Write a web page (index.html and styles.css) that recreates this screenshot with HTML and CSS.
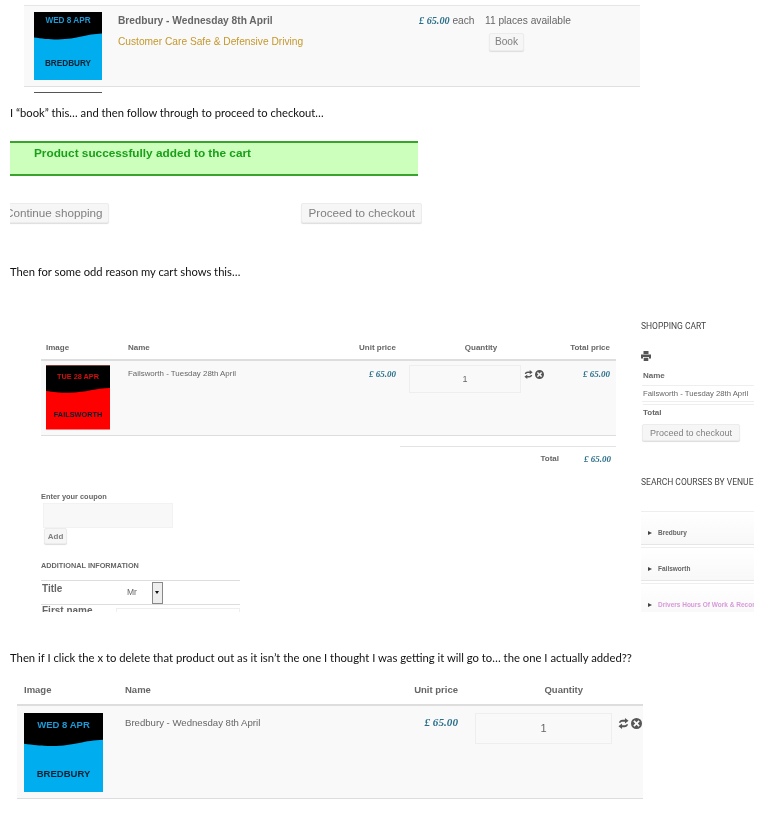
FILE: index.html
```html
<!DOCTYPE html>
<html>
<head>
    <title>Cart problem</title>
    <link rel="stylesheet" href="styles.css">
</head>
<body>
<svg class="defs" width="0" height="0">
    <symbol id="i-refresh" viewBox="0 0 12 12">
        <path d="M1 5.200C1.400 3 3 1.900 5 1.900h2.600V0L11.500 3 7.600 6V4.100H5C3.900 4.100 3.200 4.400 2.800 5.200zM11 6.800c-.4 2.200-2 3.300-4 3.300H4.400V12L.5 9 4.400 6v1.900H7c1.100 0 1.800-.3 2.200-1.100z"/>
    </symbol>
    <symbol id="i-remove" viewBox="0 0 12 12">
        <path fill-rule="evenodd" d="M6 0a6 6 0 1 1 0 12A6 6 0 0 1 6 0zM3.900 2.500 2.500 3.900 4.600 6 2.500 8.100l1.400 1.400L6 7.400l2.100 2.100 1.400-1.400L7.400 6l2.100-2.100-1.400-1.400L6 4.600z"/>
    </symbol>
</svg>

<div class="shot-course">
    <div class="course-row">
        <svg class="thumb thumb-course" viewBox="0 0 68 68">
            <rect width="68" height="68" fill="#00aeef"/>
            <path d="M0 0H68V21.500C52 22 44 27 24 27.500 14 27.500 8 26.500 0 25.500z" fill="#000"/>
            <text x="34" y="11" class="thumb-date blue">WED 8 APR</text>
            <text x="34" y="54" class="thumb-venue">BREDBURY</text>
        </svg>
        <div class="course-info">
            <div class="course-name">Bredbury - Wednesday 8th April</div>
            <div class="course-type">Customer Care Safe &amp; Defensive Driving</div>
        </div>
        <div class="course-price"><span class="price">£ 65.00</span> each</div>
        <div class="course-book">
            <div>11 places available</div>
            <span class="btn btn-book">Book</span>
        </div>
    </div>
    <div class="course-rule"></div>
</div>

<p class="note note-book">I “book” this… and then follow through to proceed to checkout…</p>

<div class="shot-added">
    <div class="added-banner">Product successfully added to the cart</div>
    <div class="added-actions">
        <span class="btn btn-large btn-continue">Continue shopping</span>
        <span class="btn btn-large">Proceed to checkout</span>
    </div>
</div>

<p class="note note-odd">Then for some odd reason my cart shows this…</p>

<div class="shot-cart">
    <div class="cart-main">
        <div class="cart-grid cart-head">
            <div>Image</div>
            <div>Name</div>
            <div class="right">Unit price</div>
            <div class="center">Quantity</div>
            <div class="right">Total price</div>
        </div>
        <div class="cart-grid cart-row">
            <svg class="thumb" viewBox="0 0 68 68">
                <rect width="68" height="68" fill="#f00"/>
                <path d="M0 0H68V24C52 24.500 44 28.500 24 29 14 29 8 28 0 27z" fill="#000"/>
                <text x="34" y="14" class="thumb-date red">TUE 28 APR</text>
                <text x="34" y="55" class="thumb-venue">FAILSWORTH</text>
            </svg>
            <div class="cart-name">Failsworth - Tuesday 28th April</div>
            <div class="right cart-price"><span class="price">£ 65.00</span></div>
            <div class="qty">1</div>
            <div class="cart-icons">
                <svg class="icon"><use href="#i-refresh"/></svg>
                <svg class="icon"><use href="#i-remove"/></svg>
            </div>
            <div class="right cart-price"><span class="price">£ 65.00</span></div>
        </div>
        <div class="cart-total">
            <b>Total</b>
            <span class="price">£ 65.00</span>
        </div>
        <div class="coupon-label">Enter your coupon</div>
        <div class="coupon-input"></div>
        <span class="btn btn-add">Add</span>
        <div class="info-title">ADDITIONAL INFORMATION</div>
        <div class="info-table">
            <div class="info-row">
                <b>Title</b>
                <div class="info-select">
                    <span>Mr</span>
                    <i class="select-arrow"></i>
                </div>
            </div>
            <div class="info-row">
                <b class="info-first">First name</b>
                <div class="info-field"></div>
            </div>
        </div>
    </div>

    <div class="cart-side">
        <div class="side-title">SHOPPING CART</div>
        <svg class="printer" viewBox="0 0 10 10">
            <path d="M2.500 0h5v3h-5zM0 3.600h10v4H8V6H2v1.600H0zM2.700 6.700h4.600V10H2.700z"/>
        </svg>
        <div class="side-head">Name</div>
        <div class="side-item">Failsworth - Tuesday 28th April</div>
        <div class="side-head side-total">Total</div>
        <span class="btn btn-side">Proceed to checkout</span>
        <div class="side-title side-search">SEARCH COURSES BY VENUE</div>
        <div class="venue"><i class="caret"></i>Bredbury</div>
        <div class="venue"><i class="caret"></i>Failsworth</div>
        <div class="venue venue-pink"><i class="caret"></i>Drivers Hours Of Work &amp; Records</div>
    </div>
</div>

<p class="note note-then">Then if I click the x to delete that product out as it isn’t the one I thought I was getting it will go to… the one I actually added??</p>

<div class="shot-final">
    <div class="final-grid final-head">
        <div>Image</div>
        <div>Name</div>
        <div class="right">Unit price</div>
        <div class="right">Quantity</div>
    </div>
    <div class="final-grid final-row">
        <svg class="thumb thumb-final" viewBox="0 0 68 68">
            <rect width="68" height="68" fill="#00aeef"/>
            <path d="M0 0H68V23C52 23.500 44 28 24 28.500 14 28.500 8 27.500 0 26.500z" fill="#000"/>
            <text x="34" y="12.500" class="thumb-date blue">WED 8 APR</text>
            <text x="34" y="55" class="thumb-venue">BREDBURY</text>
        </svg>
        <div class="final-name">Bredbury - Wednesday 8th April</div>
        <div class="right final-price"><span class="price">£ 65.00</span></div>
        <div class="qty qty-final">1</div>
        <div class="cart-icons final-icons">
            <svg class="icon"><use href="#i-refresh"/></svg>
            <svg class="icon"><use href="#i-remove"/></svg>
        </div>
    </div>
</div>
</body>
</html>
```
FILE: styles.css
```css
html, body {
    margin: 0;
    padding: 0;
    background: #fff;
}
body {
    width: 767px;
    height: 821px;
    overflow: hidden;
    font-family: "Liberation Sans", Arial, sans-serif;
    color: #666;
    /* the whole page is pasted, scaled screenshots */
    filter: blur(.3px);
}
.defs {
    position: absolute;
}
.right {
    text-align: right;
}
.center {
    text-align: center;
}
.price {
    font-family: "Liberation Serif", "Times New Roman", serif;
    font-style: italic;
    font-weight: bold;
    color: #2a6f8a;
}
.note {
    margin: 0;
    padding-left: 10px;
    font-family: Lato, sans-serif;
    font-size: 11.200px;
    line-height: 14px;
    color: #111;
    white-space: nowrap;
}
.btn {
    display: inline-block;
    box-sizing: border-box;
    border: 1px solid #ececec;
    border-radius: 2px;
    background: #f6f6f6;
    box-shadow: 0 1px 1px #ddd;
    color: #808080;
    text-align: center;
    white-space: nowrap;
}

/* thumbs */
.thumb {
    display: block;
    width: 64px;
    height: 65px;
}
.thumb text {
    font-family: "Liberation Sans", Arial, sans-serif;
    font-weight: bold;
    font-size: 7.800px;
    text-anchor: middle;
}
.thumb-venue {
    fill: #0a2030;
}
.thumb-date.blue {
    fill: #1c9ad6;
}
.thumb-date.red {
    fill: #d01010;
}
.thumb-course {
    width: 68px;
    height: 68px;
}
.thumb-final {
    width: 79px;
    height: 81px;
}
.thumb-course text, .thumb-final text {
    font-size: 8.200px;
}

/* first shot, course list */
.shot-course {
    padding: 5px 127px 0 24px;
}
.course-row {
    display: flex;
    height: 82px;
    box-sizing: border-box;
    padding: 6px 0 0 10px;
    border-top: 1px solid #e6e6e6;
    border-bottom: 1px solid #e0e0e0;
    background: #f9f9f9;
    font-size: 10.200px;
}
.course-info {
    width: 301px;
    margin-left: 16px;
    padding-top: 3px;
}
.course-name {
    font-weight: bold;
    line-height: 12px;
}
.course-type {
    margin-top: 8px;
    line-height: 13px;
    color: #c4982c;
}
.course-price {
    width: 66px;
    padding-top: 3px;
    line-height: 12px;
}
.course-book {
    padding-top: 3px;
    line-height: 12px;
}
.btn-book {
    display: block;
    width: 35px;
    height: 18px;
    margin: 6px 0 0 4px;
    line-height: 16px;
}
.course-rule {
    width: 68px;
    height: 1px;
    margin: 5px 0 0 10px;
    background: #555;
}
.note-book {
    margin-top: 13px;
}

/* second shot, added to cart */
.shot-added {
    width: 412px;
    margin: 21px 0 0 10px;
    overflow: hidden;
}
.added-banner {
    width: 408px;
    height: 35px;
    box-sizing: border-box;
    padding: 3px 0 0 24px;
    border-top: 2px solid #3aa32e;
    border-bottom: 2px solid #3aa32e;
    background: #ccffbb;
    color: #1a9f1a;
    font-size: 11.800px;
    font-weight: bold;
    line-height: 14px;
}
.added-actions {
    display: flex;
    justify-content: space-between;
    margin-top: 27px;
    padding-bottom: 2px;
}
.btn-large {
    height: 20px;
    padding: 0 6px;
    font-size: 11.700px;
    line-height: 18px;
}
.btn-continue {
    margin-left: -12px;
}
.note-odd {
    margin-top: 40px;
}

/* third shot, wrong cart */
.shot-cart {
    display: grid;
    grid-template-columns: 575px 113px;
    column-gap: 25px;
    height: 303px;
    margin-top: 30px;
    padding-left: 41px;
    overflow: hidden;
}
.cart-main {
    padding-top: 34px;
    overflow: hidden;
}
.cart-grid {
    display: grid;
    font-size: 8px;
}
.cart-head {
    grid-template-columns: 82px 200px 68px 170px 44px;
    height: 18px;
    padding-left: 5px;
    box-sizing: border-box;
    border-bottom: 2px solid #ddd;
    font-weight: bold;
}
.cart-row {
    grid-template-columns: 82px 200px 68px 125px 25px 64px;
    height: 75px;
    box-sizing: border-box;
    padding: 4px 0 0 5px;
    border-bottom: 1px solid #ddd;
    background: #f9f9f9;
}
.cart-name {
    padding-top: 3px;
    font-size: 7.900px;
    line-height: 12px;
}
.cart-price {
    padding-top: 4px;
}
.qty {
    height: 26px;
    margin-left: 13px;
    border: 1px solid #eee;
    text-align: center;
    font-size: 9px;
    line-height: 26px;
}
.cart-icons {
    display: flex;
    gap: 2px;
    padding: 5px 0 0 3px;
}
.icon {
    width: 9px;
    height: 9px;
    fill: #555;
}
.cart-row .price {
    font-size: 9px;
}
.cart-total {
    display: flex;
    justify-content: flex-end;
    gap: 25px;
    margin: 10px 0 0 359px;
    padding: 7px 5px 0 0;
    border-top: 1px solid #e4e4e4;
    font-size: 8px;
    line-height: 10px;
}
.cart-total .price {
    font-size: 9px;
}
.coupon-label {
    margin-top: 28px;
    font-size: 7.400px;
    font-weight: bold;
    line-height: 10px;
}
.coupon-input {
    width: 130px;
    height: 25px;
    margin: 1px 0 0 2px;
    background: #f8f8f8;
    border: 1px solid #f2f2f2;
    box-sizing: border-box;
}
.btn-add {
    display: block;
    width: 23px;
    height: 16px;
    margin: 0 0 0 3px;
    font-size: 8px;
    font-weight: bold;
    line-height: 15px;
}
.info-title {
    margin-top: 17px;
    font-size: 7.300px;
    font-weight: bold;
    line-height: 10px;
}
.info-table {
    width: 199px;
    margin-top: 9px;
    border-top: 1px solid #ddd;
}
.info-row {
    display: flex;
    height: 23px;
    border-bottom: 1px solid #ddd;
    font-size: 10px;
}
.info-row b {
    width: 75px;
    padding: 2px 0 0 1px;
    box-sizing: border-box;
    line-height: 12px;
}
.info-row .info-first {
    padding-top: 0;
}
.info-select {
    display: flex;
    flex: 1;
    padding-top: 1px;
    font-size: 8.500px;
    line-height: 21px;
}
.info-select span {
    width: 36px;
    padding-left: 11px;
    box-sizing: border-box;
}
.select-arrow {
    position: relative;
    width: 9px;
    height: 20px;
    border: 1px solid #888;
    background: #eee;
}
.select-arrow::after {
    content: "";
    position: absolute;
    top: 8px;
    left: 2px;
    border-style: solid;
    border-width: 3px 2.500px 0;
    border-color: #111 transparent transparent;
}
.info-field {
    flex: 1;
    height: 30px;
    margin-top: 3px;
    border: 1px solid #eee;
}

/* sidebar */
.cart-side {
    padding-top: 12px;
    overflow: hidden;
    font-size: 8px;
}
.side-title {
    font-family: Roboto, sans-serif;
    font-size: 8.500px;
    line-height: 11px;
    white-space: nowrap;
    color: #444;
}
.printer {
    display: block;
    width: 10px;
    height: 10px;
    margin: 19px 0 0 0;
    fill: #555;
}
.side-head {
    margin: 10px 0 0 2px;
    font-weight: bold;
    line-height: 10px;
}
.side-item {
    margin: 4px 0 0 1px;
    padding: 2px 0 2px 1px;
    border-top: 1px solid #eee;
    border-bottom: 1px solid #eee;
    font-size: 7.700px;
    line-height: 11px;
    white-space: nowrap;
}
.side-total {
    margin-top: 2px;
    padding-top: 3px;
    border-top: 1px solid #eee;
}
.btn-side {
    display: block;
    width: 98px;
    height: 17px;
    margin: 6px 0 0 1px;
    font-size: 9px;
    line-height: 16px;
}
.side-search {
    margin-top: 36px;
}
.venue {
    height: 34px;
    margin-top: 2px;
    padding: 16px 0 0 7px;
    box-sizing: border-box;
    border-top: 1px solid #eee;
    border-bottom: 1px solid #e6e6e6;
    background: linear-gradient(#fff, #f8f8f8);
    font-size: 6.500px;
    font-weight: bold;
    line-height: 9px;
    white-space: nowrap;
}
.side-search + .venue {
    margin-top: 23px;
}
.venue-pink {
    color: #d79ad9;
}
.caret {
    display: inline-block;
    width: 0;
    height: 0;
    margin-right: 6px;
    border-style: solid;
    border-width: 2.500px 0 2.500px 4px;
    border-color: transparent transparent transparent #444;
}
.note-then {
    margin-top: 39px;
    font-size: 11.300px;
}

/* last shot, the product actually added */
.shot-final {
    width: 626px;
    margin: 19px 0 0 17px;
}
.final-grid {
    display: grid;
}
.final-head {
    grid-template-columns: 101px 232px 101px 125px;
    height: 20px;
    padding-left: 7px;
    border-bottom: 2px solid #ddd;
    font-size: 9.500px;
    font-weight: bold;
    line-height: 12px;
}
.final-row {
    grid-template-columns: 101px 232px 101px 154px 32px;
    height: 93px;
    box-sizing: border-box;
    padding: 6px 0 0 7px;
    border-bottom: 1px solid #ddd;
    background: #f9f9f9;
    font-size: 9.600px;
}
.final-name {
    line-height: 12px;
    padding-top: 5px;
}
.final-price {
    padding-top: 3px;
}
.final-row .price {
    font-size: 11.200px;
    line-height: 14px;
}
.qty-final {
    width: 135px;
    height: 29px;
    margin: 1px 0 0 17px;
    font-size: 11px;
    line-height: 29px;
}
.final-icons {
    gap: 2px;
    padding: 6px 0 0 6px;
}
.final-icons .icon {
    width: 11px;
    height: 11px;
}
```
